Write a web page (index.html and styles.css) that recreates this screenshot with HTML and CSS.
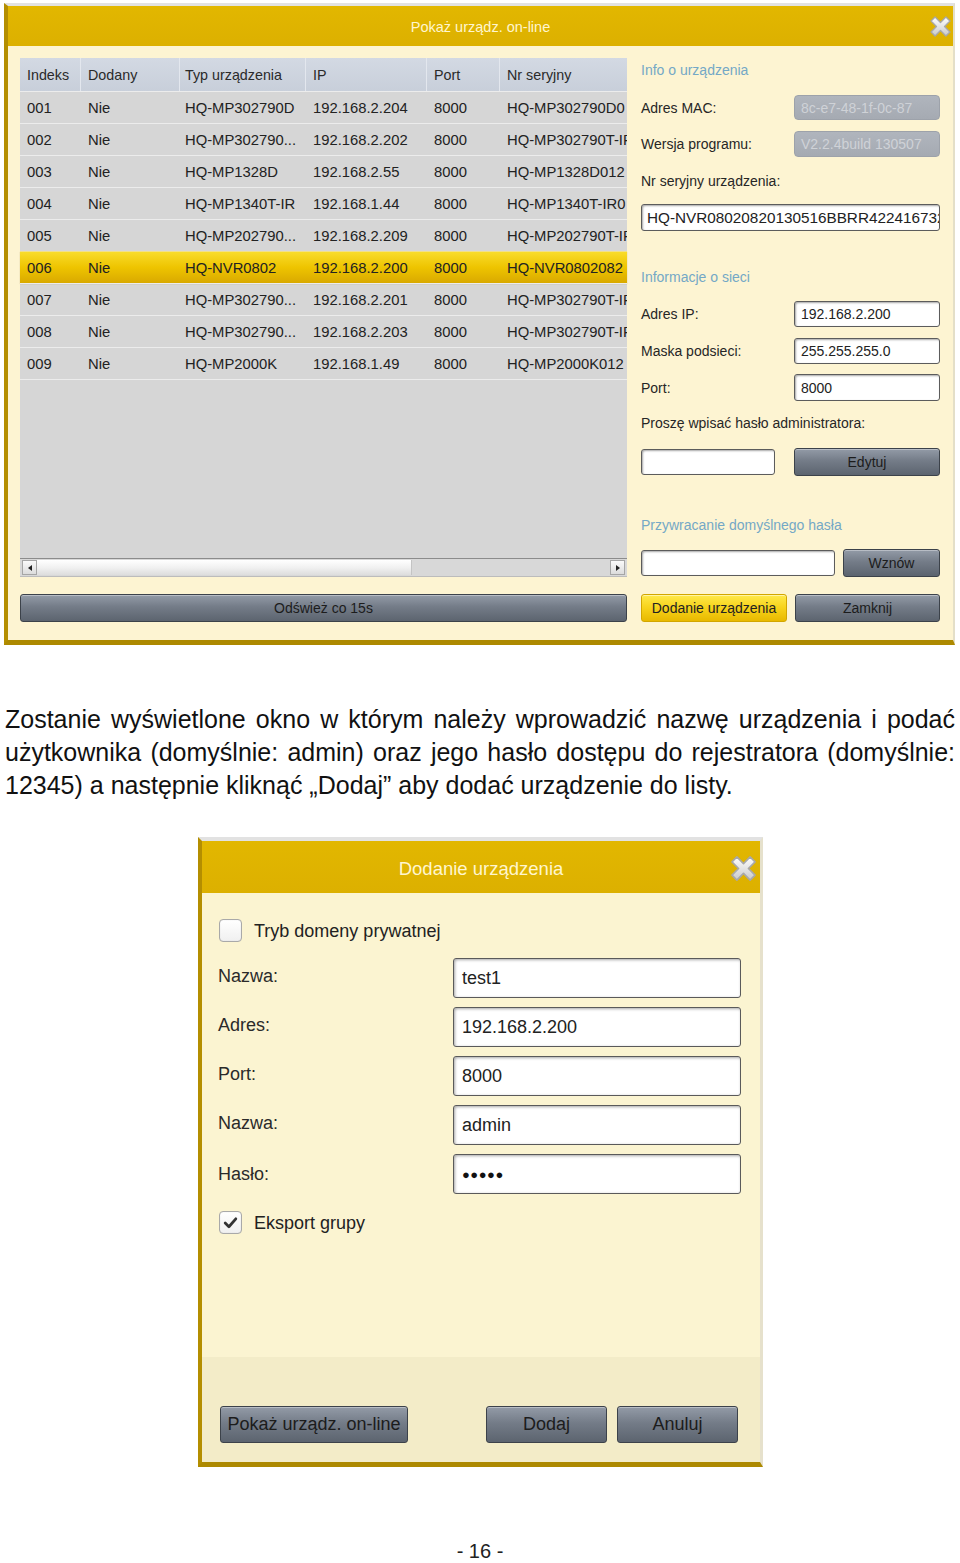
FILE: index.html
```html
<!DOCTYPE html>
<html lang="pl">
<head>
<meta charset="utf-8">
<title>Pokaż urządz. on-line</title>
<link rel="stylesheet" href="styles.css">
</head>
<body>
<div class="page">

  <div class="dlg1">
    <div class="title1">
      <span></span>
      <span class="ttext1">Pokaż urządz. on-line</span>
      <svg class="close close1" viewBox="0 0 20 20"><defs><linearGradient id="xg1" x1="0" y1="0" x2="0" y2="1"><stop offset="0" stop-color="#ffffff"/><stop offset="1" stop-color="#c9c9c9"/></linearGradient></defs><path d="M3,6 L6,3 L10,7 L14,3 L17,6 L13,10 L17,14 L14,17 L10,13 L6,17 L3,14 L7,10 Z" fill="url(#xg1)" stroke="#a8a8a8" stroke-width="1" stroke-linejoin="round"/></svg>
    </div>
    <div class="body1">
      <div class="main1">
        <div class="tablebox">
          <div class="trow thead">
            <div class="c">Indeks</div><div class="c">Dodany</div><div class="c ct">Typ urządzenia</div><div class="c">IP</div><div class="c">Port</div><div class="c">Nr seryjny</div>
          </div>
          <div class="trow"><div class="c">001</div><div class="c">Nie</div><div class="c ct">HQ-MP302790D</div><div class="c">192.168.2.204</div><div class="c">8000</div><div class="c">HQ-MP302790D0</div></div>
          <div class="trow"><div class="c">002</div><div class="c">Nie</div><div class="c ct">HQ-MP302790...</div><div class="c">192.168.2.202</div><div class="c">8000</div><div class="c">HQ-MP302790T-IR</div></div>
          <div class="trow"><div class="c">003</div><div class="c">Nie</div><div class="c ct">HQ-MP1328D</div><div class="c">192.168.2.55</div><div class="c">8000</div><div class="c">HQ-MP1328D012</div></div>
          <div class="trow"><div class="c">004</div><div class="c">Nie</div><div class="c ct">HQ-MP1340T-IR</div><div class="c">192.168.1.44</div><div class="c">8000</div><div class="c">HQ-MP1340T-IR0</div></div>
          <div class="trow"><div class="c">005</div><div class="c">Nie</div><div class="c ct">HQ-MP202790...</div><div class="c">192.168.2.209</div><div class="c">8000</div><div class="c">HQ-MP202790T-IR</div></div>
          <div class="trow sel"><div class="c">006</div><div class="c">Nie</div><div class="c ct">HQ-NVR0802</div><div class="c">192.168.2.200</div><div class="c">8000</div><div class="c">HQ-NVR0802082</div></div>
          <div class="trow"><div class="c">007</div><div class="c">Nie</div><div class="c ct">HQ-MP302790...</div><div class="c">192.168.2.201</div><div class="c">8000</div><div class="c">HQ-MP302790T-IR</div></div>
          <div class="trow"><div class="c">008</div><div class="c">Nie</div><div class="c ct">HQ-MP302790...</div><div class="c">192.168.2.203</div><div class="c">8000</div><div class="c">HQ-MP302790T-IR</div></div>
          <div class="trow"><div class="c">009</div><div class="c">Nie</div><div class="c ct">HQ-MP2000K</div><div class="c">192.168.1.49</div><div class="c">8000</div><div class="c">HQ-MP2000K012</div></div>
          <div class="filler"></div>
          <div class="scroll">
            <div class="sarrow"><svg viewBox="0 0 8 8" class="tri"><path d="M6,1 L2,4 L6,7 Z" fill="#222"/></svg></div>
            <div class="thumb"></div>
            <div class="strack"></div>
            <div class="sarrow"><svg viewBox="0 0 8 8" class="tri"><path d="M2,1 L6,4 L2,7 Z" fill="#222"/></svg></div>
          </div>
        </div>

        <div class="panel">
          <div class="sect s-info">Info o urządzenia</div>
          <div class="prow r-mac"><span class="plabel">Adres MAC:</span><div class="inp dis">8c-e7-48-1f-0c-87</div></div>
          <div class="prow r-ver"><span class="plabel">Wersja programu:</span><div class="inp dis">V2.2.4build 130507</div></div>
          <div class="plabel l-sn">Nr seryjny urządzenia:</div>
          <div class="inp sn">HQ-NVR08020820130516BBRR422416732</div>
          <div class="sect s-net">Informacje o sieci</div>
          <div class="prow r-ip"><span class="plabel">Adres IP:</span><div class="inp">192.168.2.200</div></div>
          <div class="prow r-mask"><span class="plabel">Maska podsieci:</span><div class="inp">255.255.255.0</div></div>
          <div class="prow r-port"><span class="plabel">Port:</span><div class="inp">8000</div></div>
          <div class="plabel l-pw">Proszę wpisać hasło administratora:</div>
          <div class="prow r-pw"><div class="inp pw"></div><div class="btn b-edit">Edytuj</div></div>
          <div class="sect s-rst">Przywracanie domyślnego hasła</div>
          <div class="prow r-rst"><div class="inp rst"></div><div class="btn b-wz">Wznów</div></div>
        </div>
      </div>
      <div class="btnrow1">
        <div class="btn b-ref">Odśwież co 15s</div>
        <div class="btn ybtn b-add">Dodanie urządzenia</div>
        <div class="btn b-close">Zamknij</div>
      </div>
    </div>
  </div>

  <p class="para"><span class="jl">Zostanie wyświetlone okno w którym należy wprowadzić nazwę urządzenia i podać</span><span class="jl">użytkownika (domyślnie: admin) oraz jego hasło dostępu do rejestratora (domyślnie:</span><span class="ll">12345) a następnie kliknąć „Dodaj” aby dodać urządzenie do listy.</span></p>

  <div class="dlg2">
    <div class="title2">
      <span></span>
      <span class="ttext2">Dodanie urządzenia</span>
      <svg class="close close2" viewBox="0 0 20 20"><defs><linearGradient id="xg2" x1="0" y1="0" x2="0" y2="1"><stop offset="0" stop-color="#ffffff"/><stop offset="1" stop-color="#c9c9c9"/></linearGradient></defs><path d="M3,6 L6,3 L10,7 L14,3 L17,6 L13,10 L17,14 L14,17 L10,13 L6,17 L3,14 L7,10 Z" fill="url(#xg2)" stroke="#a8a8a8" stroke-width="1" stroke-linejoin="round"/></svg>
    </div>
    <div class="body2">
      <div class="form2">
        <div class="chkrow c1"><span class="chk"></span><span>Tryb domeny prywatnej</span></div>
        <div class="frow f1"><span class="flabel">Nazwa:</span><div class="finp">test1</div></div>
        <div class="frow"><span class="flabel">Adres:</span><div class="finp">192.168.2.200</div></div>
        <div class="frow"><span class="flabel">Port:</span><div class="finp">8000</div></div>
        <div class="frow"><span class="flabel">Nazwa:</span><div class="finp">admin</div></div>
        <div class="frow"><span class="flabel">Hasło:</span><div class="finp dots">●●●●●</div></div>
        <div class="chkrow c2"><span class="chk on"><svg viewBox="0 0 16 16" class="tick"><path d="M3,8.5 L6.5,12 L13,4.5" fill="none" stroke="#333" stroke-width="2.6" stroke-linecap="round" stroke-linejoin="round"/></svg></span><span>Eksport grupy</span></div>
      </div>
      <div class="foot2">
        <div class="btn b2 b-show">Pokaż urządz. on-line</div>
        <div class="fgap"></div>
        <div class="btn b2 b-dodaj">Dodaj</div>
        <div class="btn b2 b-anul">Anuluj</div>
      </div>
    </div>
  </div>

  <div class="pagenum">- 16 -</div>
</div>
</body>
</html>
```
FILE: styles.css
```css
html, body {
  margin: 0;
  padding: 0;
  background: #ffffff;
}
body {
  font-family: "Liberation Sans", Arial, sans-serif;
  color: #1e1e1e;
}
.page {
  width: 960px;
  height: 1563px;
  padding-top: 3px;
  box-sizing: border-box;
  overflow: hidden;
}

/* ---------- dialog 1 ---------- */
.dlg1 {
  margin-left: 4px;
  width: 951px;
  box-sizing: border-box;
  border-top: 3px solid #e2e2e2;
  border-left: 4px solid #b48e00;
  border-right: 2px solid #e4dfc8;
  border-bottom: 5px solid #ad8900;
  background: #fdf4d2;
}
.title1 {
  height: 40px;
  background: linear-gradient(#e2b700, #dcb000);
  display: grid;
  grid-template-columns: 1fr auto 1fr;
  align-items: center;
}
.ttext1 {
  color: #fff6cf;
  font-size: 14.5px;
  padding-top: 1px;
}
.close { display: block; justify-self: end; }
.close1 { width: 27px; height: 27px; margin-right: -1px; margin-top: 0; }

.body1 {
  padding: 12px 13px 18px 12px;
}
.main1 {
  display: flex;
  gap: 14px;
}
.tablebox {
  width: 607px;
  height: 519px;
  background: #d6d6d6;
  display: flex;
  flex-direction: column;
}
.trow {
  display: grid;
  grid-template-columns: 61px 99px 126px 121px 73px 127px;
  height: 32px;
  box-sizing: border-box;
  border-top: 1px solid #ececec;
  align-items: center;
  font-size: 14.8px;
  color: #222;
}
.trow .c {
  padding-left: 7px;
  white-space: nowrap;
  overflow: hidden;
}
.trow .ct { padding-left: 5px; }
.thead {
  height: 33px;
  border-top: none;
  background: linear-gradient(#d3d9e3, #c8cfda);
  font-size: 14.3px;
  color: #2a2a2a;
}
.thead .c {
  height: 100%;
  display: flex;
  align-items: center;
  border-right: 1px solid #e3e7ee;
  box-sizing: border-box;
}
.thead .c:last-child { border-right: none; }
.trow.sel {
  background: linear-gradient(#f9dc2a, #eec400 50%, #d9a900);
  border-top: 1px solid #f1e08a;
  box-shadow: 0 1px 1px rgba(120, 90, 0, 0.35);
}
.filler { flex: 1; border-top: 1px solid #ececec; }
.scroll {
  height: 19px;
  box-sizing: border-box;
  border-top: 1px solid #8c8c8c;
  border-bottom: 1px solid #bcbcbc;
  display: flex;
  background: #d8d8d8;
  padding: 1px 2px;
}
.sarrow {
  width: 15px;
  box-sizing: border-box;
  border: 1px solid #a6a6a6;
  background: linear-gradient(#fafafa, #dcdcdc);
  display: flex;
  align-items: center;
  justify-content: center;
}
.tri { width: 8px; height: 8px; }
.thumb {
  width: 374px;
  background: linear-gradient(#ffffff, #f1f1f1 50%, #dddddd);
  border-right: 1px solid #c4c4c4;
}
.strack { flex: 1; }

/* right panel */
.panel {
  width: 299px;
  display: flex;
  flex-direction: column;
  font-size: 14px;
}
.sect {
  color: #74a8c6;
  font-size: 14px;
  line-height: 16px;
}
.plabel {
  color: #262626;
  line-height: 16px;
  white-space: nowrap;
}
.prow {
  display: flex;
  justify-content: space-between;
  align-items: center;
}
.inp {
  width: 146px;
  box-sizing: border-box;
  background: #ffffff;
  border: 1px solid #5c5c5c;
  border-radius: 3px;
  box-shadow: inset 1px 1px 2px rgba(0,0,0,0.35);
  padding-left: 6px;
  display: flex;
  align-items: center;
  color: #222;
  white-space: nowrap;
  overflow: hidden;
}
.inp.dis {
  background: linear-gradient(#b0b5bd, #a5aab2);
  border: 1px solid #9da2aa;
  box-shadow: none;
  color: #cfd2d7;
  border-radius: 4px;
}
.s-info { margin-top: 4px; }
.r-mac { margin-top: 17px; }
.r-mac .inp { height: 25px; }
.r-ver { margin-top: 11px; }
.r-ver .inp { height: 26px; }
.l-sn { margin-top: 16px; }
.inp.sn { margin-top: 15px; width: 299px; height: 27px; font-size: 15.3px; padding-left: 5px; }
.s-net { margin-top: 38px; }
.r-ip { margin-top: 16px; }
.r-ip .inp, .r-mask .inp { height: 26px; }
.r-mask { margin-top: 11px; }
.r-port { margin-top: 10px; }
.r-port .inp { height: 27px; }
.l-pw { margin-top: 14px; }
.r-pw { margin-top: 17px; height: 28px; }
.inp.pw { width: 134px; height: 26px; }
.b-edit { width: 146px; height: 28px; }
.s-rst { margin-top: 41px; }
.r-rst { margin-top: 16px; height: 28px; }
.inp.rst { width: 194px; height: 26px; }
.b-wz { width: 97px; height: 28px; }

.btn {
  box-sizing: border-box;
  background: linear-gradient(#939ba7, #747c88 45%, #5c646f);
  border: 1px solid #3c424a;
  border-radius: 3px;
  box-shadow: inset 0 1px 0 rgba(255,255,255,0.35);
  display: flex;
  align-items: center;
  justify-content: center;
  color: #1c1c1c;
  font-size: 14px;
  white-space: nowrap;
}
.ybtn {
  background: linear-gradient(#ffe94a, #f7d21a 50%, #e8b900);
  border: 1px solid #d2a600;
  box-shadow: inset 0 1px 0 rgba(255,255,255,0.5);
  color: #222;
}
.btnrow1 {
  display: flex;
  margin-top: 17px;
  height: 28px;
}
.b-ref { width: 607px; }
.b-add { width: 146px; margin-left: 14px; }
.b-close { width: 145px; margin-left: 8px; }

/* ---------- paragraph ---------- */
.para {
  margin: 58px 0 0 5px;
  width: 950px;
  font-size: 25px;
  line-height: 33px;
  color: #111;
  font-family: "Liberation Sans", Arial, sans-serif;
}
.jl {
  display: block;
  text-align: justify;
  text-align-last: justify;
  white-space: nowrap;
}
.ll { display: block; }

/* ---------- dialog 2 ---------- */
.dlg2 {
  margin-top: 35px;
  margin-left: 198px;
  width: 565px;
  box-sizing: border-box;
  border-top: 4px solid #e2e2e2;
  border-left: 4px solid #b48e00;
  border-right: 3px solid #e6e1cc;
  border-bottom: 5px solid #ad8900;
}
.title2 {
  height: 52px;
  background: linear-gradient(#e2b700, #dcb000);
  display: grid;
  grid-template-columns: 1fr auto 1fr;
  align-items: center;
}
.ttext2 {
  color: #fff6cf;
  font-size: 18.5px;
  margin-top: 3px;
}
.close2 { width: 33px; height: 33px; margin-right: 0; margin-top: 2px; }
.body2 { background: #fbf4d1; }
.form2 {
  height: 464px;
  box-sizing: border-box;
  padding: 25px 19px 0 16px;
  font-size: 18px;
  color: #222;
}
.chkrow {
  display: flex;
  align-items: center;
  gap: 12px;
  height: 24px;
}
.chkrow.c1 { padding-left: 1px; }
.chkrow > span:last-child { margin-top: 3px; }
.chkrow.c2 { margin-top: 16px; padding-left: 1px; }
.chk {
  width: 23px;
  height: 23px;
  box-sizing: border-box;
  border: 1px solid #a9a9a9;
  border-radius: 4px;
  background: linear-gradient(#ffffff, #f0f0f0);
  box-shadow: inset 0 0 1px rgba(0,0,0,0.2);
  display: flex;
  align-items: center;
  justify-content: center;
}
.tick { width: 17px; height: 17px; }
.frow {
  display: flex;
  justify-content: space-between;
  align-items: center;
  margin-top: 9px;
}
.frow.f1 { margin-top: 16px; }
.flabel {
  color: #2a2a2a;
  margin-top: -4px;
}
.frow:nth-child(6) .flabel { margin-top: 0; }
.finp {
  width: 288px;
  height: 40px;
  box-sizing: border-box;
  border: 1px solid #5a5a5a;
  border-radius: 3px;
  background: #ffffff;
  box-shadow: inset 1px 1px 3px rgba(0,0,0,0.35);
  padding-left: 8px;
  display: flex;
  align-items: center;
  font-size: 18px;
  color: #222;
}
.finp.dots { font-size: 13px; letter-spacing: 0.5px; color: #111; }
.foot2 {
  height: 105px;
  box-sizing: border-box;
  background: #f3ecc8;
  padding: 49px 22px 19px 18px;
  display: flex;
  gap: 10px;
}
.fgap { flex: 1; }
.b2 {
  height: 37px;
  font-size: 18px;
}
.b-show { width: 188px; }
.b-dodaj { width: 121px; }
.b-anul { width: 121px; }

.pagenum {
  margin-top: 72px;
  text-align: center;
  font-size: 20px;
  line-height: 24px;
  color: #222;
}
```
